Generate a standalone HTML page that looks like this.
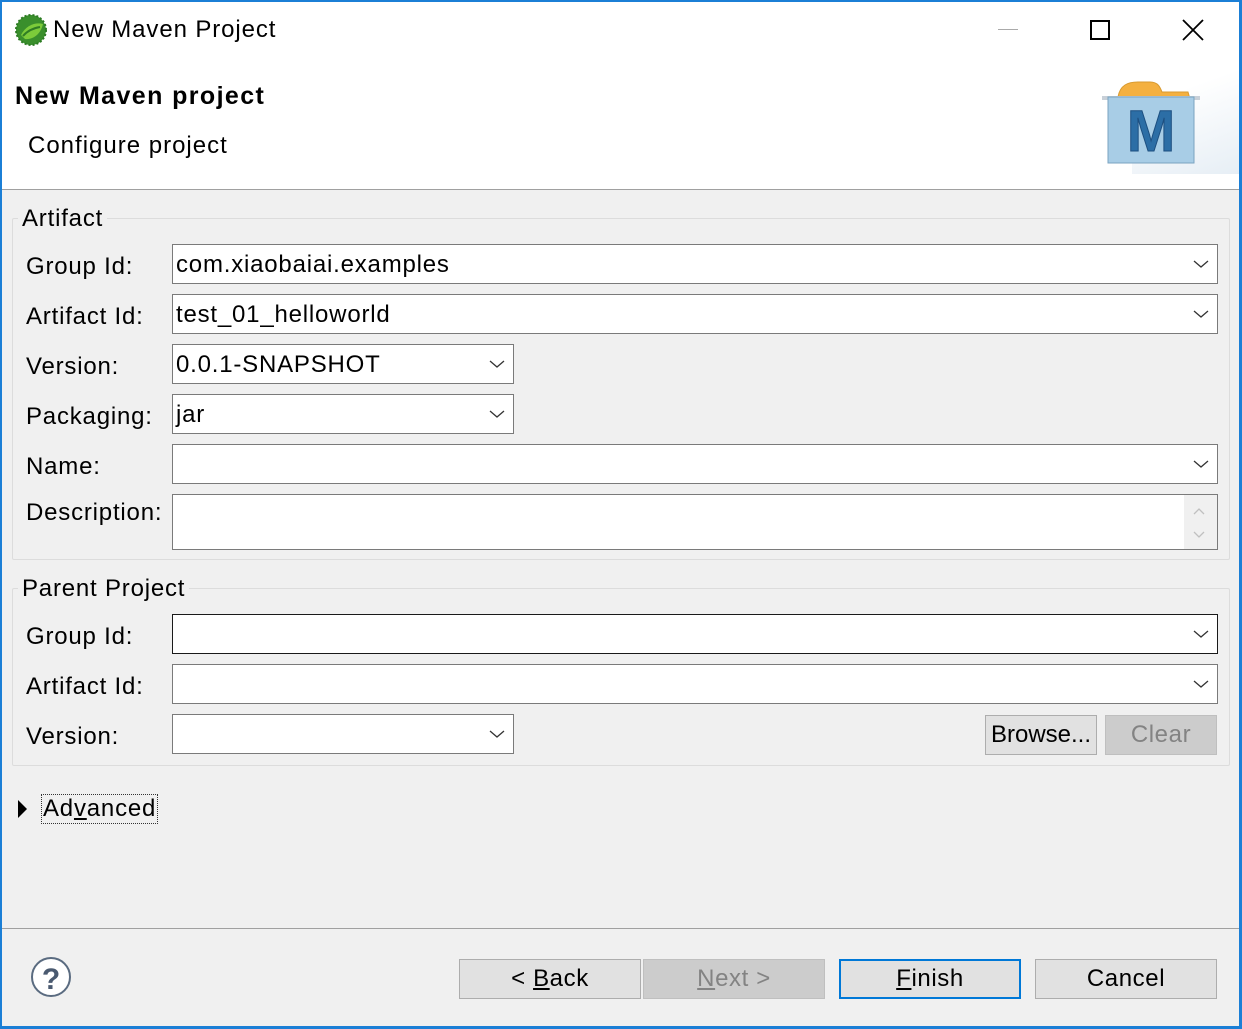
<!DOCTYPE html>
<html><head><meta charset="utf-8"><style>
*{margin:0;padding:0;box-sizing:border-box}
body{width:1242px;height:1029px;overflow:hidden;font-family:"Liberation Sans",sans-serif;color:#000;background:#1b7fd6;position:relative}
.win{position:absolute;left:2px;top:2px;width:1237px;height:1024px;background:#f0f0f0;overflow:hidden}
.hdr{position:absolute;left:0;top:0;width:1237px;height:188px;background:#fff;border-bottom:1px solid #a0a0a0}
.t{position:absolute;white-space:nowrap;font-size:24px;line-height:28px;letter-spacing:0.8px}
.box{position:absolute;background:#fff;border:1px solid #7a7a7a}
.box.dark{border-color:#1a1a1a}
.grp{position:absolute;border:1px solid #dcdcdc;border-radius:2px}
.btn{position:absolute;height:40px;background:#e1e1e1;border:1px solid #adadad;font-size:24px;text-align:center;line-height:37px;letter-spacing:0.6px}
u{text-decoration:underline}
</style></head><body>
<div class="win">
<div class="hdr"></div>
<svg style="position:absolute;left:12px;top:11px" width="34" height="34" viewBox="0 0 34 34"><circle cx="17" cy="17" r="15" fill="#3a8f2c" stroke="#2b7a22" stroke-width="2" stroke-dasharray="2 2"/><path d="M7 22 C12 12 22 9 29 11 C27 20 20 27 11 26 Z" fill="#7ccb3a"/><path d="M9 23 C14 17 20 15 26 14" stroke="#2f7d24" stroke-width="2" fill="none"/></svg>
<div class="t" style="left:51px;top:14px;letter-spacing:0.9px">New Maven Project</div>
<div style="position:absolute;left:996px;top:27px;width:20px;height:1px;background:#aaa"></div>
<div style="position:absolute;left:1088px;top:18px;width:20px;height:20px;border:2px solid #000"></div>
<svg style="position:absolute;left:1180px;top:17px" width="22" height="22"><path d="M1 1L21 21M21 1L1 21" stroke="#000" stroke-width="1.8"/></svg>
<div class="t" style="left:13px;top:80px;font-weight:bold;font-size:25px;letter-spacing:1.4px">New Maven project</div>
<div class="t" style="left:26px;top:130px;letter-spacing:1px">Configure project</div>
<div style="position:absolute;left:1130px;top:60px;width:110px;height:112px;background:linear-gradient(160deg,#fff 30%,#e6eef5 100%)"></div>
<svg style="position:absolute;left:1096px;top:75px" width="104" height="90" viewBox="0 0 104 90"><path d="M20 20 C22 8 30 5 40 5 L52 5 C60 5 62 10 64 15 L90 15 L92 22 L14 22 Z" fill="#f4b040" stroke="#d89a30"/><rect x="4" y="19" width="98" height="4" fill="#c8d0d8"/><rect x="10" y="20" width="86" height="66" fill="#a8cde6" stroke="#7aa3c0"/><text x="53" y="74" font-family="Liberation Sans" font-weight="bold" font-size="58" text-anchor="middle" fill="#2c6ea6" stroke="#1d4f80" stroke-width="1">M</text></svg>

<div class="grp" style="left:10px;top:216px;width:1218px;height:342px"></div>
<div class="t" style="left:16px;top:203px;background:#f0f0f0;padding:0 4px">Artifact</div>
<div class="t" style="left:24px;top:251px">Group Id:</div>
<div class="t" style="left:24px;top:301px">Artifact Id:</div>
<div class="t" style="left:24px;top:351px">Version:</div>
<div class="t" style="left:24px;top:401px">Packaging:</div>
<div class="t" style="left:24px;top:451px">Name:</div>
<div class="t" style="left:24px;top:497px">Description:</div>

<div class="box" style="left:170px;top:242px;width:1046px;height:40px"><span class="t" style="left:3px;top:6px">com.xiaobaiai.examples</span></div>
<div class="box" style="left:170px;top:292px;width:1046px;height:40px"><span class="t" style="left:3px;top:6px">test_01_helloworld</span></div>
<div class="box" style="left:170px;top:342px;width:342px;height:40px"><span class="t" style="left:3px;top:6px">0.0.1-SNAPSHOT</span></div>
<div class="box" style="left:170px;top:392px;width:342px;height:40px"><span class="t" style="left:3px;top:6px">jar</span></div>
<div class="box" style="left:170px;top:442px;width:1046px;height:40px"></div>
<div class="box" style="left:170px;top:492px;width:1046px;height:56px"><div style="position:absolute;right:0;top:0;width:33px;height:54px;background:#f0f0f0"></div></div>
<svg style="position:absolute;left:1190px;top:504px" width="14" height="34"><path d="M2 8L7 3L12 8M2 26L7 31L12 26" stroke="#c0c0c0" stroke-width="1.3" fill="none"/></svg>

<div class="grp" style="left:10px;top:586px;width:1218px;height:178px"></div>
<div class="t" style="left:16px;top:573px;background:#f0f0f0;padding:0 4px">Parent Project</div>
<div class="t" style="left:24px;top:621px">Group Id:</div>
<div class="t" style="left:24px;top:671px">Artifact Id:</div>
<div class="t" style="left:24px;top:721px">Version:</div>
<div class="box dark" style="left:170px;top:612px;width:1046px;height:40px"></div>
<div class="box" style="left:170px;top:662px;width:1046px;height:40px"></div>
<div class="box" style="left:170px;top:712px;width:342px;height:40px"></div>
<div class="btn" style="left:983px;top:713px;width:112px;letter-spacing:0">Browse...</div>
<div class="btn" style="left:1103px;top:713px;width:112px;background:#cccccc;border-color:#bfbfbf;color:#838383">Clear</div>

<svg style="position:absolute;left:0;top:0" width="1237" height="760">
<g stroke="#333" stroke-width="1.3" fill="none">
<path d="M1192 259l7 6 7-6M1192 309l7 6 7-6M488 359l7 6 7-6M488 409l7 6 7-6M1192 459l7 6 7-6M1192 629l7 6 7-6M1192 679l7 6 7-6M488 729l7 6 7-6"/>
</g></svg>

<svg style="position:absolute;left:16px;top:798px" width="10" height="18"><path d="M0 0L9 9L0 18Z" fill="#000"/></svg>
<div class="t" style="left:39px;top:792px;border:1px dotted #333;padding:0 1px">Ad<u>v</u>anced</div>

<div style="position:absolute;left:0;top:926px;width:1237px;height:1px;background:#a0a0a0"></div>
<svg style="position:absolute;left:28px;top:954px" width="44" height="44"><circle cx="21" cy="21" r="19" fill="#fff" stroke="#5a6b80" stroke-width="2"/><text x="21" y="33" font-family="Liberation Sans" font-weight="bold" font-size="30" text-anchor="middle" fill="#4a5a70">?</text></svg>
<div class="btn" style="left:457px;top:957px;width:182px">&lt; <u>B</u>ack</div>
<div class="btn" style="left:641px;top:957px;width:182px;background:#cccccc;border-color:#bfbfbf;color:#838383"><u>N</u>ext &gt;</div>
<div class="btn" style="left:837px;top:957px;width:182px;border:2px solid #0078d7;line-height:35px"><u>F</u>inish</div>
<div class="btn" style="left:1033px;top:957px;width:182px">Cancel</div>
</div>
</body></html>
